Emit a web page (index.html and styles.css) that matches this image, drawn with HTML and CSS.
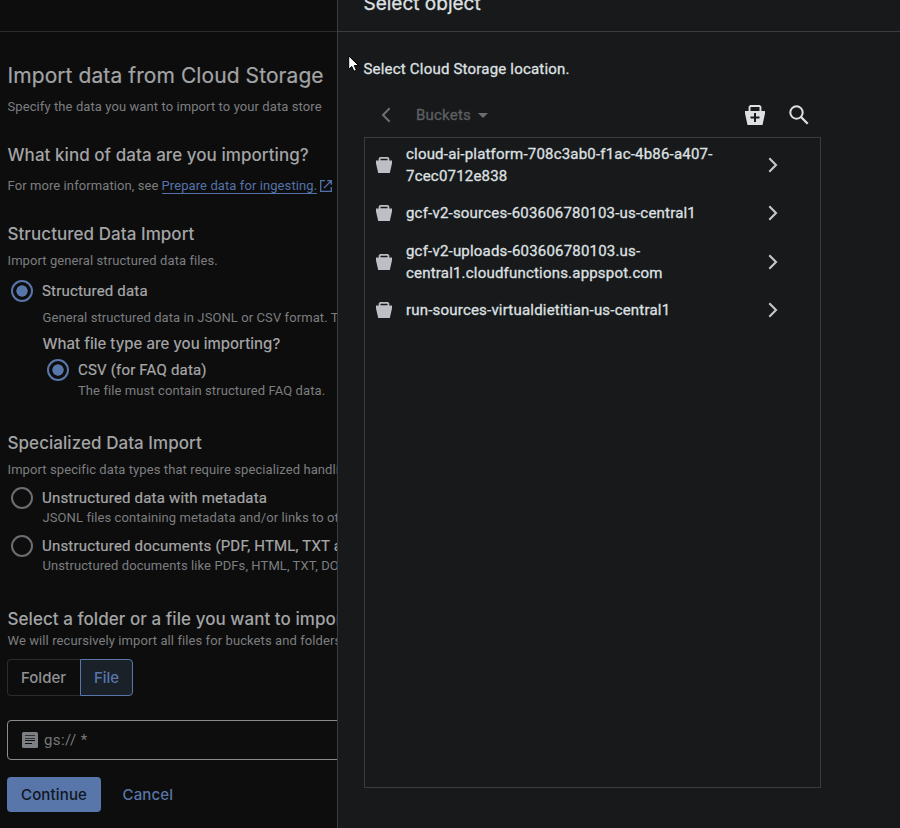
FILE: index.html
```
<!DOCTYPE html>
<html lang="en">
<head>
<meta charset="utf-8">
<title>Import data from Cloud Storage</title>
<link rel="stylesheet" href="styles.css">
</head>
<body>
<svg class="defs" width="0" height="0">
  <symbol id="bucket" viewBox="0 0 16 16"><path fill-rule="evenodd" d="M4 0h8l1.300 1.300V3.500H16v3L13.800 16H2.200L0 6.500v-3h2.700V1.300zM4.500 1.700v1.600h7V1.700z"/></symbol>
  <symbol id="chevron" viewBox="0 0 10 16"><path d="M1.300 1.300 8 8l-6.700 6.700" fill="none" stroke="currentColor" stroke-width="2.100"/></symbol>
</svg>
<div class="app">
  <main class="page">
    <div class="topbar"></div>
    <div class="content">
      <h1>Import data from Cloud Storage</h1>
      <p class="intro">Specify the data you want to import to your data store</p>

      <h2 class="kind">What kind of data are you importing?</h2>
      <p class="more">For more information, see <a>Prepare data for ingesting.</a><svg class="ext" viewBox="0 0 12 12"><path d="M5 .7H.7v10.600h10.600V7M7.300.7h4v4M11 1 4 8" fill="none" stroke="currentColor" stroke-width="1.300"/></svg></p>

      <h2 class="structured">Structured Data Import</h2>
      <p class="lead">Import general structured data files.</p>
      <div class="option first"><span class="radio on"></span>Structured data</div>
      <div class="nested">
        <p class="general">General structured data in JSONL or CSV format. The</p>
        <h3>What file type are you importing?</h3>
        <div class="option"><span class="radio on"></span>CSV (for FAQ data)</div>
        <p class="hint">The file must contain structured FAQ data.</p>
      </div>

      <h2 class="special">Specialized Data Import</h2>
      <p class="lead">Import specific data types that require specialized handling</p>
      <div class="option second"><span class="radio"></span>Unstructured data with metadata</div>
      <p class="desc">JSONL files containing metadata and/or links to other</p>
      <div class="option third"><span class="radio"></span>Unstructured documents (PDF, HTML, TXT and</div>
      <p class="desc">Unstructured documents like PDFs, HTML, TXT, DOCX</p>

      <h2 class="select">Select a folder or a file you want to import</h2>
      <p class="recursive">We will recursively import all files for buckets and folders</p>
      <div class="toggle"><span class="folder">Folder</span><span class="file">File</span></div>
      <div class="field">
        <svg class="doc" viewBox="0 0 16 16"><rect width="16" height="16" rx="1.500" fill="#7c8084"/><path d="M3 3.500h10M3 6.500h10" stroke="#2f3133" stroke-width="1"/><path d="M3 8.500h10M3 11.500h7" stroke="#0d0d0d" stroke-width="1"/></svg>
        <span>gs:// *</span>
      </div>
      <div class="actions"><span class="continue">Continue</span><span class="cancel">Cancel</span></div>
    </div>
  </main>

  <aside class="drawer">
    <header><h4>Select object</h4></header>
    <div class="body">
      <p class="location">Select Cloud Storage location.</p>
      <div class="crumbs">
        <svg class="back" viewBox="0 0 10 16"><path d="M8.700 1.300 2 8l6.700 6.700" fill="none" stroke="currentColor" stroke-width="2.100"/></svg>
        <span>Buckets</span>
        <i class="caret"></i>
        <svg class="add" viewBox="0 0 20 20"><path fill="#dfe0e4" fill-rule="evenodd" d="M5.200 0h9.600L16.400 1.600V6H20v2.500L17.500 20h-15L0 8.500V6h3.600V1.600zM5.500 2v4h9V2z"/><path d="M10 8v9M5.500 12.500h9" stroke="#18191b" stroke-width="2"/></svg>
        <svg class="search" viewBox="0 0 20 20"><circle cx="7.500" cy="7.500" r="6.200" fill="none" stroke="#dfe0e4" stroke-width="2"/><path d="m12 12 6.700 6.700" stroke="#dfe0e4" stroke-width="2.300"/></svg>
      </div>
      <ul class="list">
        <li><svg class="bucket"><use href="#bucket"/></svg><span>cloud-ai-platform-708c3ab0-f1ac-4b86-a407-<br>7cec0712e838</span><svg class="go"><use href="#chevron"/></svg></li>
        <li><svg class="bucket"><use href="#bucket"/></svg><span>gcf-v2-sources-603606780103-us-central1</span><svg class="go"><use href="#chevron"/></svg></li>
        <li><svg class="bucket"><use href="#bucket"/></svg><span>gcf-v2-uploads-603606780103.us-<br>central1.cloudfunctions.appspot.com</span><svg class="go"><use href="#chevron"/></svg></li>
        <li><svg class="bucket"><use href="#bucket"/></svg><span>run-sources-virtualdietitian-us-central1</span><svg class="go"><use href="#chevron"/></svg></li>
      </ul>
    </div>
  </aside>
</div>
<svg class="cursor" viewBox="0 0 12 18"><path d="M.7.900v13.500l3.100-2.900 2.100 4.800 2.500-1.100-2.100-4.600h4.400z" fill="#fff" stroke="#000" stroke-width="1"/></svg>
</body>
</html>
```
FILE: styles.css
```
* { box-sizing: border-box; margin: 0; padding: 0; }
body {
  width: 900px; height: 828px; overflow: hidden;
  background: #0d0d0d; color: #a3a4a5;
  font: 13px/20px Roboto, "Liberation Sans", sans-serif;
  letter-spacing: .09px;
}
.defs { display: block; height: 0; }
.app { display: flex; height: 828px; }

.page { width: 337px; overflow: hidden; white-space: nowrap; flex: none; }
.topbar { height: 32px; border-bottom: 1px solid #2b2c2d; }
.content { padding-left: 7.500px; }
.content p { color: #7c7e80; height: 20px; }
h1, h2, h3, h4 { font-family: Inter, sans-serif; color: #a3a4a6; }
h1 { font-size: 21px; font-weight: 400; line-height: 28px; letter-spacing: .08px; margin-top: 30px; -webkit-text-stroke: .2px; }
h2 { font-size: 17px; font-weight: 500; line-height: 24px; letter-spacing: .05px; }
h3 { font-size: 15px; font-weight: 500; line-height: 20px; letter-spacing: 0; margin-top: 6px; }
.intro { margin-top: 7px; }
.kind { margin-top: 26px; }
.more { display: flex; margin-top: 9px; }
.more a { color: #5472a9; border-bottom: 1px solid #5472a9; height: 18px; margin-left: 3px; }
.ext { width: 12px; height: 12px; color: #5472a9; margin: 4px 0 0 3px; flex: none; }
.structured { margin-top: 26px; }
.lead { margin-top: 5px; }
.option {
  display: flex; align-items: center; height: 22px;
  gap: 9px; padding-left: 3.500px;
  font-size: 15px; letter-spacing: .19px; color: #a6a7a8;
  -webkit-text-stroke: .2px;
}
.radio { width: 22px; height: 22px; border: 2px solid #6b6d70; border-radius: 50%; flex: none; }
.radio.on { border-color: #5876aa; background: radial-gradient(circle, #5876aa 5.300px, transparent 6px); }
.first { margin-top: 9px; }
.nested { padding-left: 35px; }
.general { margin-top: 6px; }
.nested .option { margin-top: 5px; padding-left: 4.500px; }
.hint { padding-left: 35.500px; }
.special { margin-top: 30px; }
.second { margin-top: 7px; }
.content .desc { height: 18px; line-height: 18px; padding-left: 35px; }
.third { margin-top: 8px; }
.select { margin-top: 32px; }
.toggle, .field, .actions { margin-left: -.500px; }
.toggle { display: flex; margin-top: 8px; width: 126px; height: 37px; font: 500 15px/35px Inter, sans-serif; letter-spacing: 0; }
.folder { width: 73px; border: 1px solid #2b2c2d; border-right: 0; border-radius: 4px 0 0 4px; padding-left: 13px; color: #909294; }
.file { width: 53px; border: 1px solid #5876aa; border-radius: 0 4px 4px 0; background: #1a2128; color: #5876aa; text-align: center; }
.field {
  display: flex; align-items: center; gap: 6px; width: 500px; height: 40px;
  margin-top: 24px; padding-left: 14px;
  border: 1px solid #8b8c8e; border-radius: 4px; color: #77797b; font-size: 15px; letter-spacing: .4px;
}
.doc { width: 16px; height: 16px; }
.actions { display: flex; gap: 21.500px; margin-top: 17px; font: 500 15px/35px Inter, sans-serif; letter-spacing: .15px; }
.continue { width: 94px; border-radius: 4px; background: #5876aa; color: #11151c; text-align: center; }
.cancel { color: #5876aa; }

.drawer { flex: 1; border-left: 1px solid #3b3c3f; background: #18191b; color: #dfe0e2; overflow: hidden; -webkit-text-stroke: .3px; }
.drawer header { display: flow-root; height: 32px; border-bottom: 1px solid #3b3c3f; padding-left: 25.500px; }
h4 { font-size: 19px; font-weight: 400; line-height: 24px; letter-spacing: 0; margin-top: -8px; color: #dfe0e2; }
.body { padding: 27px 0 0 26px; font-size: 15px; letter-spacing: .2px; }
.location { line-height: 20px; margin-left: -.500px; }
.crumbs { display: flex; align-items: center; height: 44px; margin-top: 14px; color: #5e6063; }
.back { width: 10px; height: 16px; margin-left: 16.500px; color: #6b6d70; }
.crumbs span { margin-left: 25.500px; width: 55px; }
.caret { margin-left: 7px; border: 5.500px solid transparent; border-top-color: #6b6d70; border-bottom: 0; }
.add { width: 20px; height: 20px; margin-left: 257px; }
.search { width: 20px; height: 20px; margin-left: 24px; }
.list { width: 457px; height: 651px; list-style: none; border: 1px solid #3b3c3f; }
.list li { display: flex; align-items: center; min-height: 42.600px; padding: 5px 42px 5px 11px; line-height: 22px; }
.bucket { width: 16px; height: 16px; fill: #bcbfc5; }
.list span { flex: 1; margin-left: 14px; }
.go { width: 10px; height: 16px; color: #c6c8cb; }
.cursor { position: absolute; left: 348px; top: 55px; width: 12px; height: 18px; }
```
